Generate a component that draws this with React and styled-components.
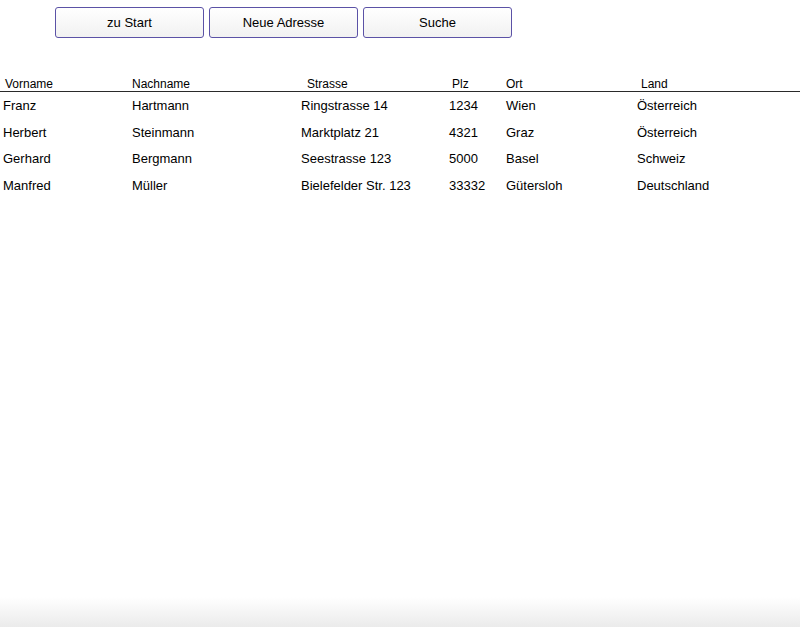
import React from "react";
import styled, { createGlobalStyle } from "styled-components";

const Global = createGlobalStyle`
  html, body { margin: 0; padding: 0; background: #fff; }
  body { font-family: "Liberation Sans", Arial, sans-serif; color: #000; }
`;

const Page = styled.div`
  position: relative;
  width: 800px;
  height: 627px;
  overflow: hidden;
  background: linear-gradient(to bottom, #fff 0, #fff 597px, #ebebeb 627px);
`;

const Toolbar = styled.div`
  display: flex;
  gap: 5px;
  padding: 7px 0 0 55px;
`;

const Button = styled.button`
  width: 149px;
  height: 31px;
  box-sizing: border-box;
  border: 1px solid #5b52a6;
  border-radius: 3px;
  background: linear-gradient(to bottom, #ffffff, #f1f1f1);
  font-family: "Liberation Sans", Arial, sans-serif;
  font-size: 13px;
  color: #000;
  padding: 0;
  cursor: pointer;
`;

const Table = styled.div`
  margin-top: 39px;
`;

const cols = "129px 169px 148px 57px 131px 1fr";

const HeadRow = styled.div`
  display: grid;
  grid-template-columns: ${cols};
  padding-left: 3px;
  height: 14px;
  border-bottom: 1.5px solid #2a2a2a;
  font-size: 12px;
  line-height: 14px;
`;

const HeadCell = styled.div`
  padding-left: ${(p) => p.$shift}px;
`;

const Row = styled.div`
  display: grid;
  grid-template-columns: ${cols};
  padding-left: 3px;
  height: 26.7px;
  font-size: 13px;
  line-height: 27px;
`;

const Cell = styled.div`
  white-space: nowrap;
`;

const headers = [
  ["Vorname", 2],
  ["Nachname", -1],
  ["Strasse", 6],
  ["Plz", 3],
  ["Ort", 0],
  ["Land", 4],
];

const rows = [
  ["Franz", "Hartmann", "Ringstrasse 14", "1234", "Wien", "Österreich"],
  ["Herbert", "Steinmann", "Marktplatz 21", "4321", "Graz", "Österreich"],
  ["Gerhard", "Bergmann", "Seestrasse 123", "5000", "Basel", "Schweiz"],
  ["Manfred", "Müller", "Bielefelder Str. 123", "33332", "Gütersloh", "Deutschland"],
];

export default function App() {
  return (
    <Page>
      <Global />
      <Toolbar>
        <Button>zu Start</Button>
        <Button>Neue Adresse</Button>
        <Button>Suche</Button>
      </Toolbar>
      <Table>
        <HeadRow>
          {headers.map(([h, s]) => (
            <HeadCell key={h} $shift={s}>{h}</HeadCell>
          ))}
        </HeadRow>
        {rows.map((r) => (
          <Row key={r[0]}>
            {r.map((c, i) => (
              <Cell key={i}>{c}</Cell>
            ))}
          </Row>
        ))}
      </Table>
    </Page>
  );
}
